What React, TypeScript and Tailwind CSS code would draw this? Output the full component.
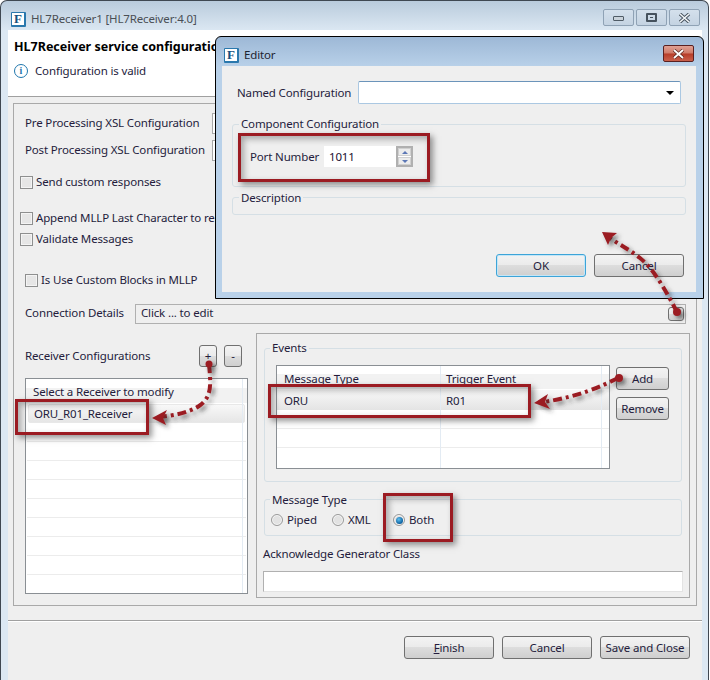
import React from "react";

const font = "font-['Noto_Sans','Open_Sans',sans-serif]";
const txt = "text-[11.5px] tracking-[-0.15px] leading-[16px] text-[#241c3c] whitespace-nowrap";
const btnBg =
  "bg-[linear-gradient(#f3f3f3_0%,#ebebeb_48%,#dddddd_50%,#cfcfcf_100%)] border border-[#707070] rounded-[3px]";

function Btn({ children, cls }: { children: React.ReactNode; cls: string }) {
  return <div className={`${btnBg} ${txt} flex items-center justify-center ${cls}`}>{children}</div>;
}

function Check({ label, cls }: { label: string; cls: string }) {
  return (
    <div className={`flex items-center h-[20px] gap-[3px] ${cls}`}>
      <span className="w-[13px] h-[13px] border border-[#8e8f8f] bg-[#e6e6e6] shadow-[inset_0_0_0_1px_#f4f4f4]" />
      <span className={txt}>{label}</span>
    </div>
  );
}

function Radio({ label, on, cls }: { label: string; on?: boolean; cls: string }) {
  return (
    <div className={`flex items-center h-[20px] gap-[4px] ${cls}`}>
      <span className="w-[12px] h-[12px] rounded-full border border-[#9a9a9a] bg-[#e2e2e2] shadow-[inset_0_0_0_1px_#f6f6f6] flex items-center justify-center">
        {on && <span className="w-[7px] h-[7px] rounded-full bg-[radial-gradient(circle_at_40%_35%,#5fc0f0,#0b5f9e_70%)]" />}
      </span>
      <span className={txt}>{label}</span>
    </div>
  );
}

function Logo({ cls }: { cls: string }) {
  return (
    <span className={`w-[15px] h-[15px] bg-white border-r-[2px] border-b-[2px] border-l border-t border-[#2a78ad] rounded-[1px] flex items-center justify-center font-['Liberation_Serif',serif] font-bold text-[13px] leading-none text-[#14507f] ${cls}`}>
      F
    </span>
  );
}

function Group({ label, cls, labelCls, children }: { label: string; cls: string; labelCls: string; children?: React.ReactNode }) {
  return (
    <div className={`relative border border-[#d5dfe5] rounded-[3px] ${cls}`}>
      <span className={`absolute px-[2px] bg-[#efefef] ${labelCls} ${txt}`}>{label}</span>
      {children}
    </div>
  );
}

function Box({ cls }: { cls: string }) {
  return (
    <div className={`absolute border-[3px] border-[#9b1b22] shadow-[3px_3px_6px_rgba(60,60,60,0.55),inset_3px_3px_6px_rgba(60,60,60,0.4)] ${cls}`} />
  );
}

function WinBtn({ children }: { children: React.ReactNode }) {
  return (
    <div className="w-[31px] h-[17px] border border-[#8fa2b5] rounded-[2px] bg-[linear-gradient(#d4e0ec,#c4d3e2)] flex items-center justify-center">
      {children}
    </div>
  );
}

const rowLines = [0, 1, 2, 3, 4, 5, 6, 7];

export default function App() {
  return (
    <div className={`relative w-[710px] h-[680px] overflow-hidden bg-white ${font}`}>
      {/* main window */}
      <div className="w-[709px] h-[680px] rounded-t-[7px] border-l border-r border-t border-[#3f4852] bg-[linear-gradient(#b9cbdc_0px,#dce8f3_30px,#dce8f3_100%)] flex flex-col pl-[7px] pr-[6px]">
        <div className="h-[29px] shrink-0 flex items-center relative pt-[7px]">
          <Logo cls="ml-[3px]" />
          <span className="ml-[5px] text-[11.5px] tracking-[-0.15px] text-[#4a4f55]">HL7Receiver1 [HL7Receiver:4.0]</span>
          <div className="ml-auto flex gap-[2px] mr-[2px] mt-[-3px]">
            <WinBtn><span className="w-[11px] h-[5px] border border-[#4f5b66] bg-[#c9d2da] rounded-[1px] mt-[2px]" /></WinBtn>
            <WinBtn><span className="w-[11px] h-[9px] border-[2px] border-[#46525e] rounded-[1px] flex items-center justify-center"><span className="w-[3px] h-[1px] bg-[#46525e]" /></span></WinBtn>
            <WinBtn>
              <svg width="13" height="10" viewBox="0 0 13 10"><path d="M2 1l9 8M11 1l-9 8" stroke="#46525e" strokeWidth="3.4" /><path d="M2 1l9 8M11 1l-9 8" stroke="#f3f6f8" strokeWidth="1.6" /></svg>
            </WinBtn>
          </div>
        </div>
        <div className="flex-1 bg-[#efefef] flex flex-col">
          {/* header */}
          <div className="h-[67px] shrink-0 bg-white border-b border-[#a0a0a0] pl-[6px]">
            <div className="pt-[9px] text-[12.5px] leading-[16px] font-bold text-black whitespace-nowrap">HL7Receiver service configuration</div>
            <div className="flex items-center mt-[8px] h-[16px]">
              <span className="w-[14px] h-[14px] rounded-full border-[1.5px] border-[#1f77ad] text-[#1f77ad] font-bold text-[10px] leading-none flex items-center justify-center font-['Liberation_Serif',serif]">i</span>
              <span className={`ml-[7px] ${txt}`}>Configuration is valid</span>
            </div>
          </div>
          {/* body */}
          <div className="h-[524px] shrink-0 border-b border-[#a0a0a0] shadow-[0_1px_0_#ffffff] pt-[6px] pl-[5px] pr-[5px]">
            <div className="h-[503px] border border-[#a9a9a9] pl-[11px] pr-[7px] pt-[9px] relative">
              <div className="h-[21px] flex items-center">
                <span className={`w-[187px] pb-[2px] ${txt}`}>Pre Processing XSL Configuration</span>
                <span className="w-[10px] h-[21px] border border-[#a9a9a9] bg-white" />
              </div>
              <div className="h-[21px] mt-[6px] flex items-center">
                <span className={`w-[187px] pb-[2px] ${txt}`}>Post Processing XSL Configuration</span>
                <span className="w-[10px] h-[21px] border border-[#a9a9a9] bg-white" />
              </div>
              <Check label="Send custom responses" cls="mt-[11px] ml-[-5px]" />
              <Check label="Append MLLP Last Character to response" cls="mt-[16px] ml-[-5px]" />
              <Check label="Validate Messages" cls="mt-[1px] ml-[-5px]" />
              <Check label="Is Use Custom Blocks in MLLP" cls="mt-[21px]" />
              <div className="mt-[14px] h-[20px] flex items-center">
                <span className={`w-[110px] pb-[2px] ${txt}`}>Connection Details</span>
                <div className={`w-[551px] h-[20px] border border-[#b0b0b0] bg-[#efefef] pl-[5px] flex items-center justify-between ${txt}`}>
                  <span className="pb-[2px]">Click ... to edit</span>
                  <span className={`${btnBg} w-[16px] h-[14px] mr-[1px]`} />
                </div>
              </div>
              <div className="mt-[9px] flex">
                {/* receivers */}
                <div className="w-[231px] shrink-0">
                  <div className="pt-[12px] h-[45px] flex">
                    <span className={`w-[174px] ${txt} mt-[3px]`}>Receiver Configurations</span>
                    <Btn cls="w-[18px] h-[22px]">+</Btn>
                    <Btn cls="ml-[7px] w-[18px] h-[22px]">-</Btn>
                  </div>
                  <div className="w-[223px] h-[216px] border border-[#8a8f94] bg-white relative overflow-hidden">
                    <div className={`h-[25px] flex items-center pl-[7px] pt-[1px] bg-[linear-gradient(#ffffff_35%,#f2f2f2_36%,#f2f2f2_96%,#ffffff_97%)] ${txt}`}>Select a Receiver to modify</div>
                    <div className={`h-[19px] mx-[2px] flex items-center pl-[5px] border border-[#e8e8e8] rounded-[2px] bg-[linear-gradient(#f8f8f8,#e6e6e6)] ${txt}`}>ORU_R01_Receiver</div>
                    {rowLines.map((i) => (
                      <div key={i} className="h-[19px] border-b border-[#ececec] mx-[1px]" />
                    ))}
                    <span className="absolute top-0 bottom-0 right-[4px] w-px bg-[#e3ebf3]" />
                  </div>
                </div>
                {/* right panel */}
                <div className="w-[434px] h-[265px] border border-[#a9a9a9] pl-[7px] pr-[7px] pt-[14px]">
                  <Group label="Events" labelCls="left-[5px] top-[-9px]" cls="w-[418px] h-[134px] pl-[11px] pr-[12px] pt-[16px]">
                    <div className="flex">
                      <div className="w-[334px] h-[104px] border border-[#8a8f94] bg-white relative">
                        <div className={`h-[21px] mt-[3px] pb-[2px] flex items-center bg-[linear-gradient(#ffffff_25%,#f2f2f2_26%,#f2f2f2_96%,#ffffff_97%)] ${txt}`}>
                          <span className="w-[162px] pl-[7px]">Message Type</span>
                          <span className="pl-[7px]">Trigger Event</span>
                        </div>
                        <div className={`h-[20px] pt-[2px] flex items-center bg-[linear-gradient(#f8f8f8,#e4e4e4)] ${txt}`}>
                          <span className="w-[162px] pl-[7px]">ORU</span>
                          <span className="pl-[7px]">R01</span>
                        </div>
                        <div className="h-[19px] border-b border-[#ececec]" />
                        <div className="h-[19px] border-b border-[#ececec]" />
                        <span className="absolute top-0 bottom-0 left-[163px] w-px bg-[#e3ebf3]" />
                        <span className="absolute top-0 bottom-0 right-[7px] w-px bg-[#e3ebf3]" />
                      </div>
                      <div className="ml-[6px] pt-[2px]">
                        <Btn cls="w-[53px] h-[23px]">Add</Btn>
                        <Btn cls="w-[53px] h-[23px] mt-[7px]">Remove</Btn>
                      </div>
                    </div>
                  </Group>
                  <Group label="Message Type" labelCls="left-[5px] top-[-8px]" cls="w-[418px] h-[37px] mt-[17px] pl-[6px] pt-[10px] flex items-start">
                    <Radio label="Piped" cls="w-[61px]" />
                    <Radio label="XML" cls="w-[61px]" />
                    <Radio label="Both" on cls="" />
                  </Group>
                  <div className={`mt-[10px] ml-[-1px] ${txt}`}>Acknowledge Generator Class</div>
                  <div className="ml-[-1px] mt-[9px] w-[420px] h-[21px] border border-[#b0b0b0] border-b-[#e3e3e3] border-r-[#e3e3e3] bg-white" />
                </div>
              </div>
            </div>
          </div>
          {/* footer */}
          <div className="flex justify-end gap-[8px] pr-[12px] pt-[15px]">
            <Btn cls="w-[90px] h-[23px]"><span><span className="underline">F</span>inish</span></Btn>
            <Btn cls="w-[90px] h-[23px]">Cancel</Btn>
            <Btn cls="w-[90px] h-[23px]">Save and Close</Btn>
          </div>
        </div>
      </div>

      {/* Editor dialog */}
      <div className="absolute left-[215px] top-[36px] w-[489px] h-[263px] rounded-t-[6px] border border-black bg-[linear-gradient(#9db8d6_0px,#b9d1e9_30px,#b9d1e9_100%)] flex flex-col pl-[6px] pr-[7px] pb-[6px]">
        <div className="h-[29px] shrink-0 flex items-center pt-[7px]">
          <Logo cls="ml-[2px]" />
          <span className="ml-[5px] text-[11.5px] tracking-[-0.15px] text-[#1d2430]">Editor</span>
          <div className="ml-auto mr-[2px] mt-[-3px] w-[31px] h-[17px] rounded-[2px] border border-[#5a2020] bg-[linear-gradient(#e0a093_0%,#cf7a68_48%,#b73c28_52%,#c9604c_100%)] flex items-center justify-center">
            <svg width="13" height="10" viewBox="0 0 13 10"><path d="M2 1l9 8M11 1l-9 8" stroke="#5e2a22" strokeWidth="3.4" /><path d="M2 1l9 8M11 1l-9 8" stroke="#ffffff" strokeWidth="1.8" /></svg>
          </div>
        </div>
        <div className="flex-1 bg-[#efefef] pl-[15px] pt-[15px]">
          <div className="flex items-center h-[23px]">
            <span className={`w-[121px] ${txt}`}>Named Configuration</span>
            <div className="w-[323px] h-[23px] bg-white rounded-[2px] border border-[#abc8e2] border-t-[#6b94ba] flex items-center justify-end pr-[6px]">
              <span className="w-0 h-0 border-l-[4px] border-r-[4px] border-t-[4px] border-l-transparent border-r-transparent border-t-black" />
            </div>
          </div>
          <Group label="Component Configuration" labelCls="left-[6px] top-[-9px]" cls="w-[454px] h-[63px] mt-[20px] ml-[-5px] pl-[17px] pt-[21px]">
            <div className="flex items-center h-[21px]">
              <span className={`w-[74px] ${txt}`}>Port Number</span>
              <div className={`w-[89px] h-[21px] bg-white pl-[5px] flex items-center justify-between ${txt}`}>
                <span className="text-[#1a1030]">1011</span>
                <div className="w-[17px] h-[21px] border-[2px] border-[#b0b0b0] flex flex-col gap-px">
                  <span className="flex-1 border border-[#d0d0d0] bg-[#ececec] flex items-center justify-center"><span className="w-0 h-0 border-l-[3px] border-r-[3px] border-b-[3px] border-l-transparent border-r-transparent border-b-[#5b77b5]" /></span>
                  <span className="flex-1 border border-[#d0d0d0] bg-[#ececec] flex items-center justify-center"><span className="w-0 h-0 border-l-[3px] border-r-[3px] border-t-[3px] border-l-transparent border-r-transparent border-t-[#5b77b5]" /></span>
                </div>
              </div>
            </div>
          </Group>
          <Group label="Description" labelCls="left-[6px] top-[-8px]" cls="w-[454px] h-[18px] mt-[10px] ml-[-5px]" />
          <div className="flex justify-end gap-[8px] pr-[12px] mt-[39px]">
            <div className={`w-[90px] h-[23px] rounded-[3px] border border-[#3da4d8] shadow-[inset_0_0_0_1px_#c4e6f7] bg-[linear-gradient(#f3f3f3_0%,#ebebeb_48%,#dddddd_50%,#cfcfcf_100%)] flex items-center justify-center ${txt}`}>OK</div>
            <Btn cls="w-[90px] h-[23px]">Cancel</Btn>
          </div>
        </div>
      </div>

      {/* annotation boxes */}
      <Box cls="left-[238px] top-[133px] w-[192px] h-[49px]" />
      <Box cls="left-[15px] top-[399px] w-[134px] h-[36px]" />
      <Box cls="left-[268px] top-[384px] w-[263px] h-[34px]" />
      <Box cls="left-[383px] top-[493px] w-[70px] h-[49px]" />

      {/* annotation arrows */}
      <svg className="absolute inset-0 pointer-events-none" width="710" height="680" viewBox="0 0 710 680" fill="none">
        <defs>
          <filter id="sh" x="-30%" y="-30%" width="160%" height="160%">
            <feDropShadow dx="3" dy="3" stdDeviation="2" floodColor="#333" floodOpacity="0.55" />
          </filter>
        </defs>
        <g filter="url(#sh)" stroke="#9b1b22" fill="none">
          <path d="M209 364 C211 385 212 397 199 406 C188 413 175 415 160 417" strokeWidth="4" strokeDasharray="9 4 3 4" />
          <path d="M618 378 C600 387 580 396 544 402" strokeWidth="4" strokeDasharray="9 4 3 4" />
          <path d="M677 312 C668 295 655 270 640 258 C630 250 620 245 610 238" strokeWidth="4" strokeDasharray="9 4 3 4" />
        </g>
        <g filter="url(#sh)" fill="#9b1b22">
          <circle cx="209" cy="364" r="3.5" />
          <circle cx="619" cy="378" r="4" />
          <circle cx="677" cy="312" r="4" />
          <path d="M152 418 L167 410 L163 418 L166 425 Z" />
          <path d="M534 403 L548 394 L545 402 L550 409 Z" />
          <path d="M602 232 L617 233 L611 238 L608 245 Z" />
        </g>
      </svg>
    </div>
  );
}
